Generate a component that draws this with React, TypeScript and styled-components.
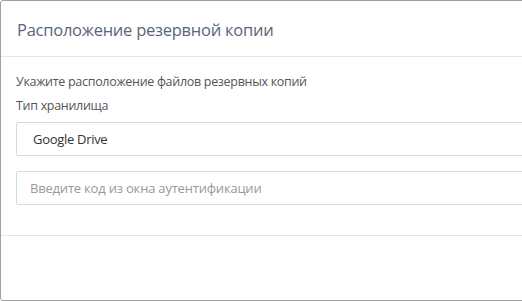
import styled, { createGlobalStyle } from "styled-components";

const GlobalStyle = createGlobalStyle`
    html, body {
        margin: 0;
        padding: 0;
        background: #ffffff;
        overflow: hidden;
    }
    body {
        font-family: "Open Sans", "Noto Sans", sans-serif;
    }
`;

export default function App() {
    return (
        <>
            <GlobalStyle />
            <Modal>
                <Header>
                    <Title>Расположение резервной копии</Title>
                </Header>
                <Body>
                    <Hint>Укажите расположение файлов резервных копий</Hint>
                    <Label>Тип хранилища</Label>
                    <Select defaultValue="gdrive">
                        <option value="gdrive">Google Drive</option>
                    </Select>
                    <Input placeholder="Введите код из окна аутентификации" />
                </Body>
                <Footer />
            </Modal>
        </>
    );
}

const Modal = styled.div`
    width: 640px;
    height: 299px;
    display: flex;
    flex-direction: column;
    background: #fff;
    border: 1px solid #a0a0a0;
    border-radius: 3px;
    box-sizing: content-box;
`;

const Header = styled.div`
    height: 55px;
    display: flex;
    align-items: center;
    padding: 0 16px;
    border-bottom: 1px solid #e5e5e5;
`;

const Title = styled.h4`
    margin: 0;
    font-size: 16.5px;
    letter-spacing: -0.25px;
    font-weight: 400;
    color: #58667a;
    padding-top: 2px;
`;

const Body = styled.div`
    height: 179px;
    box-sizing: border-box;
    padding: 15px 16px 0 15px;
    display: flex;
    flex-direction: column;
    border-bottom: 1px solid #e5e5e5;
`;

const Hint = styled.div`
    font-size: 12.5px;
    letter-spacing: -0.3px;
    line-height: 20px;
    color: #555;
    margin-bottom: 4px;
`;

const Label = styled.label`
    font-size: 12.5px;
    letter-spacing: -0.3px;
    line-height: 20px;
    color: #555;
    margin-bottom: 6px;
`;

const Select = styled.select`
    appearance: none;
    height: 34px;
    border: 1px solid #d2dcdc;
    border-radius: 2px;
    background: #fff;
    font-family: inherit;
    font-size: 13px;
    letter-spacing: -0.3px;
    color: #333;
    padding: 0 16px;
    margin-bottom: 15px;
    outline: none;
`;

const Input = styled.input`
    height: 34px;
    box-sizing: border-box;
    border: 1px solid #d2dcdc;
    border-radius: 2px;
    font-family: inherit;
    font-size: 13px;
    letter-spacing: -0.2px;
    color: #333;
    padding: 0 13px;
    outline: none;
    &::placeholder {
        color: #999;
    }
`;

const Footer = styled.div`
    flex: 1;
`;
